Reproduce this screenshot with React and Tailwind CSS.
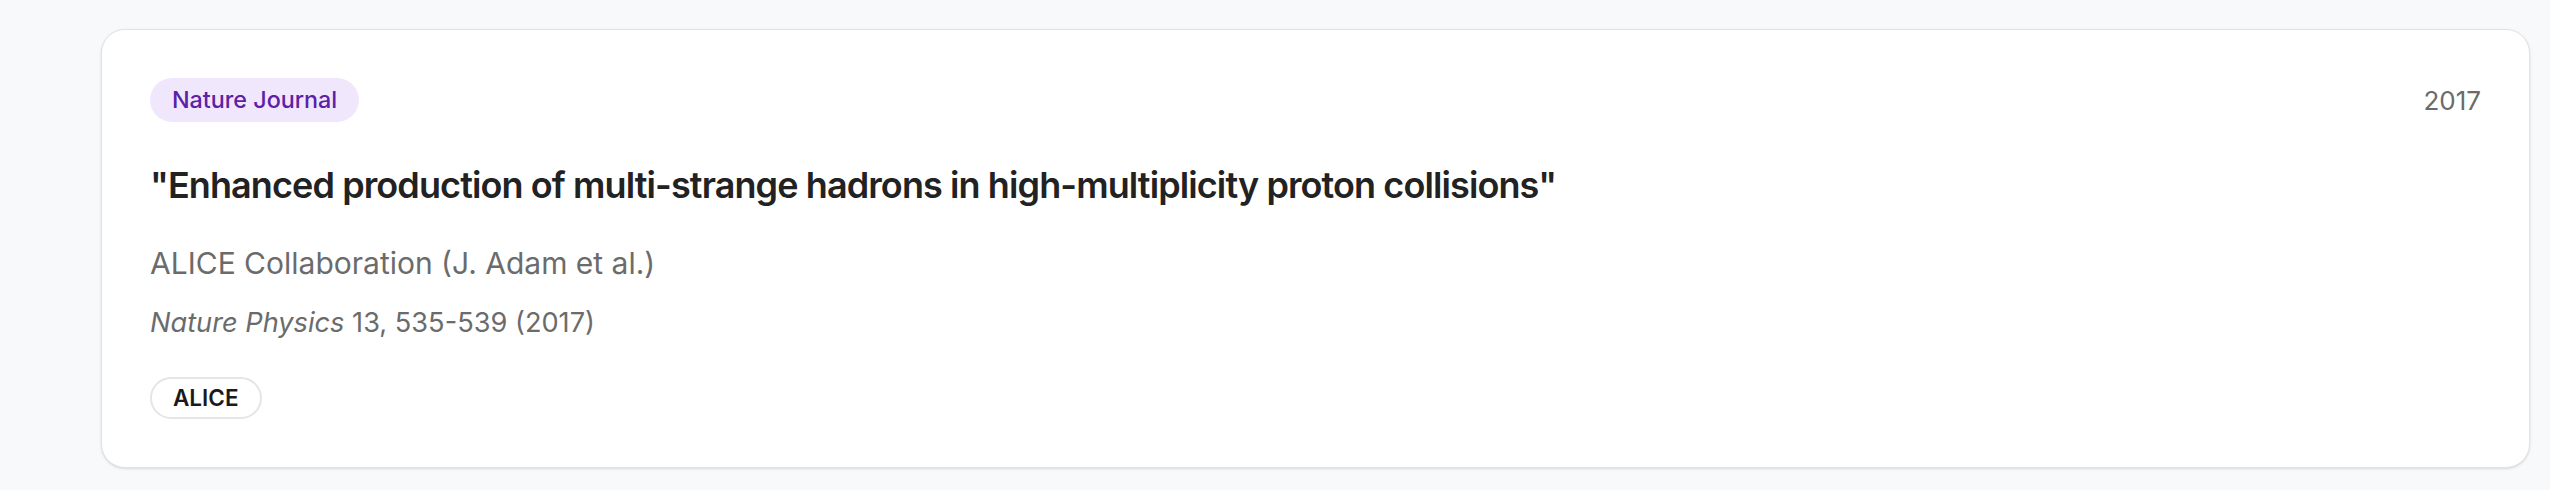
import React from 'react'

export default function App() {
    return (
        <div className="min-h-screen bg-[#f8f9fb] pt-[29px] pl-[101px] pr-5 pb-6 font-['Inter',sans-serif]">
            <div className="rounded-3xl border border-[#e3e3e6] bg-white p-12 shadow-sm">
                <div className="flex items-center justify-between">
                    <span className="rounded-full bg-[#f1e7fd] px-[22px] py-[6px] text-[23.3px] leading-[32px] font-medium text-[#5b21a6]">Nature Journal</span>
                    <span className="text-[26px] text-[#6b6b6b]">2017</span>
                </div>
                <h3 className="mt-[39px] text-[36px] leading-[48px] font-semibold tracking-tight text-[#222222]">"Enhanced production of multi-strange hadrons in high-multiplicity proton collisions"</h3>
                <p className="mt-[34px] text-[30px] leading-[40px] text-[#6b6b6b]">ALICE Collaboration (J. Adam et al.)</p>
                <p className="mt-[22px] text-[27.2px] leading-[36px] text-[#6b6b6b]">
                    <em>Nature Physics</em> 13, 535-539 (2017)
                </p>
                <div className="mt-9 flex gap-3">
                    <span className="rounded-full border-2 border-[#e5e5e5] px-[21px] py-[3px] text-[22.5px] leading-[32px] font-semibold text-[#1a1a1a]">ALICE</span>
                </div>
            </div>
        </div>
    )
}
